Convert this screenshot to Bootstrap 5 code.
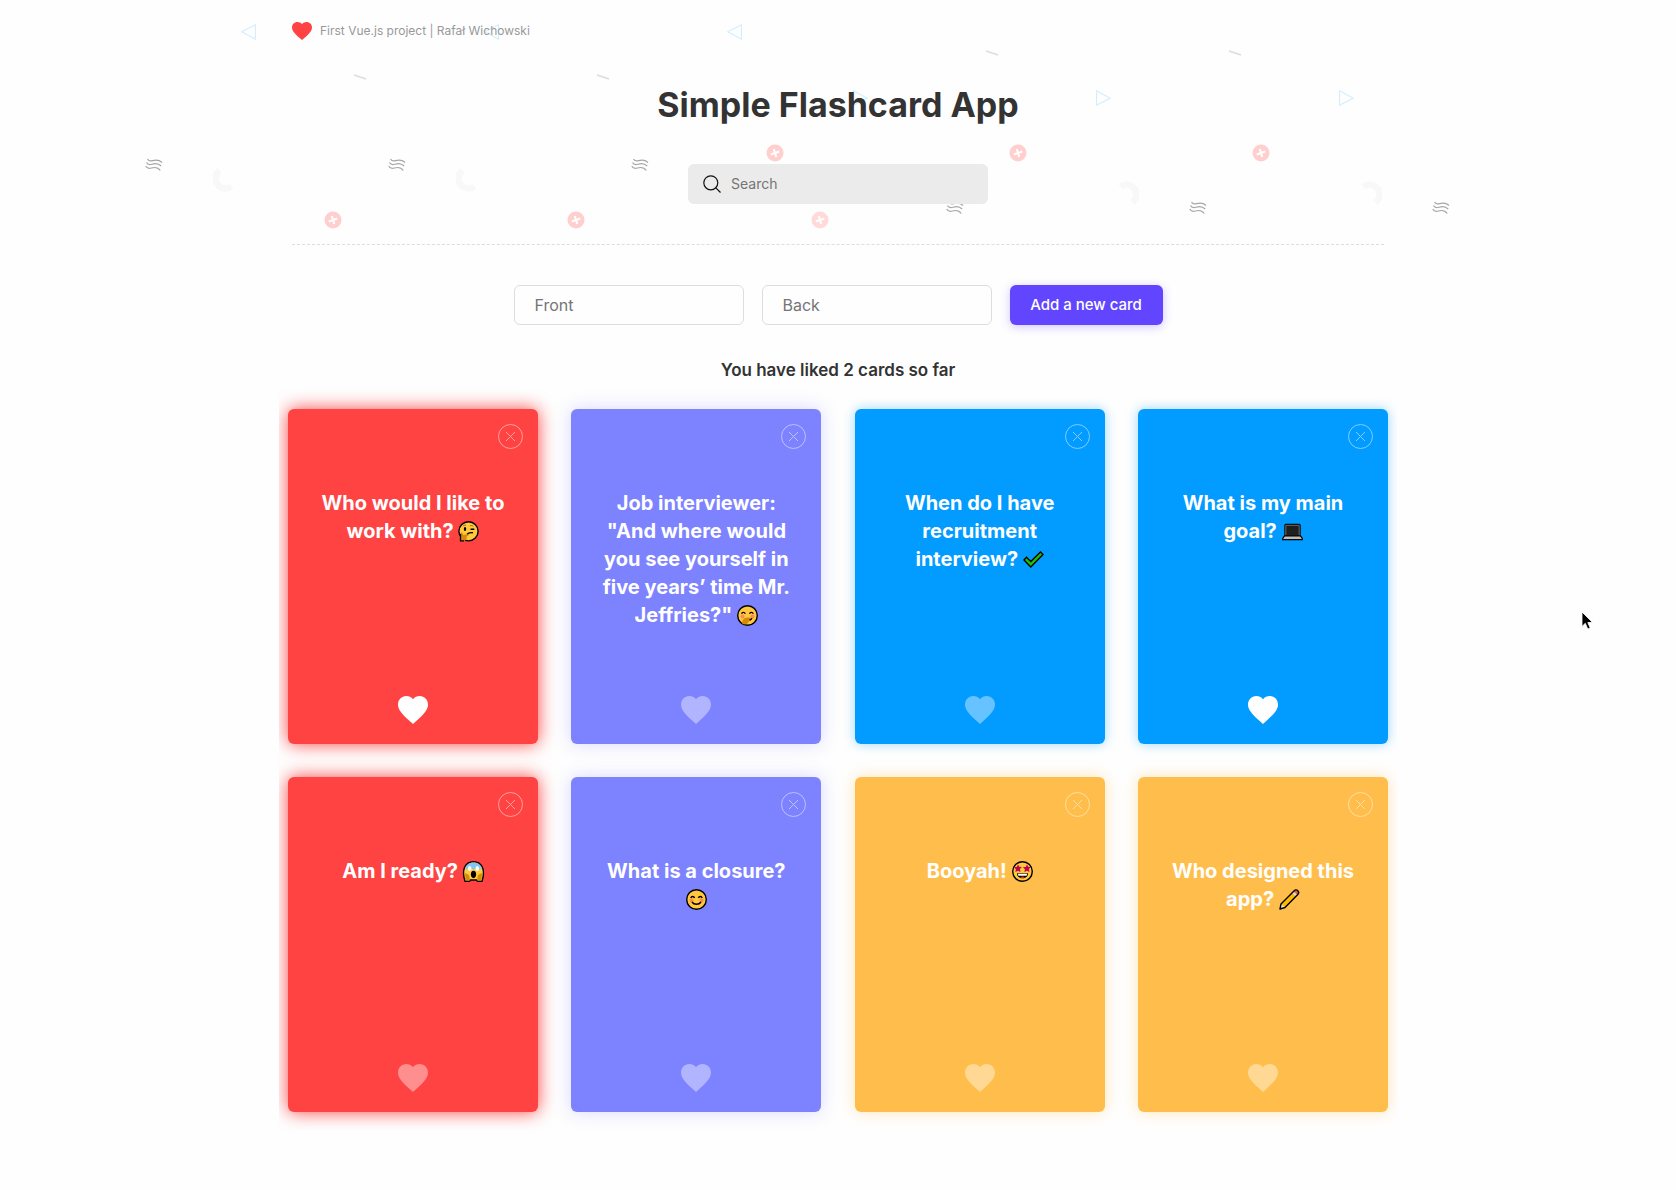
<!DOCTYPE html>
<html lang="en">
<head>
<meta charset="utf-8">
<meta name="viewport" content="width=device-width, initial-scale=1">
<title>Simple Flashcard App</title>
<link rel="stylesheet" href="https://cdn.jsdelivr.net/npm/bootstrap@5.3.0/dist/css/bootstrap.min.css">
<style>
  body { background: #fefefe; color: #333; font-family: Inter, "Open Sans", sans-serif; font-size: 16px; line-height: 24px; }
  .page { max-width: 1092px; }
  .decor { position: absolute; top: 0; left: 50%; width: 1400px; height: 240px; margin-left: -700px; z-index: -1; }
  .decor-frame { position: absolute; inset: 0 0 auto 0; height: 240px; overflow: hidden; z-index: -1; }
  .brand-link { color: #999; font-size: 12px; line-height: 22px; }
  .brand-link svg { width: 20px; height: 18px; }
  .site-head { padding: 20px 0 40px; border-bottom: 1px dashed #ddd; }
  .app-title { font-size: 34px; line-height: 40px; margin: 43px 0 39px; font-weight: 700; }
  .search-box { max-width: 300px; height: 40px; background: #ebebeb; border-radius: 6px; padding: 0 15px; gap: 10px; }
  .search-box input { font-size: 14px; line-height: 20px; }
  .search-box input::placeholder, .card-field::placeholder { color: #757575; opacity: 1; }
  .add-form { gap: 18px; padding-top: 40px; }
  .card-field { width: 230px; height: 40px; border: 1px solid #ddd; border-radius: 6px; padding: 0 20px; font-size: 16px; background: #fefefe; }
  .add-btn { width: 153px; height: 40px; padding: 0; border: 0; border-radius: 6px; background: #6246ff; color: #fff; font-size: 15px; font-weight: 500; box-shadow: 0 2px 10px rgba(98,70,255,.3); }
  .add-btn:hover { background: #5237ee; color: #fff; }
  .liked-note { font-size: 17px; font-weight: 600; margin: 33px 0 0; }
  .deck { max-width: 1118px; padding: 27px 9px 36px; overflow: hidden; }
  .deck-grid { grid-template-columns: repeat(auto-fill, 250px); justify-content: space-between; gap: 33px; }
  .flash { position: relative; height: 335px; border-radius: 6px; padding: 80px 28px 20px; color: #fff; }
  .flash p { font-size: 20px; line-height: 28px; font-weight: 700; }
  .flash p svg { width: 21px; height: 21px; vertical-align: -4px; overflow: visible; }
  .flash-red { background: #ff4343; box-shadow: 0 0 18px #ff4343; }
  .flash-violet { background: #7d82ff; box-shadow: 0 0 18px rgba(125,130,255,.3); }
  .flash-blue { background: #029bff; box-shadow: 0 0 12px rgba(2,155,255,.4); }
  .flash-amber { background: #ffbe4b; box-shadow: 0 0 15px rgba(255,190,75,.4); }
  .flash-close { position: absolute; top: 15px; right: 15px; opacity: .5; }
  .flash-close svg { width: 25px; height: 25px; }
  .flash-like { opacity: .4; }
  .flash-like.is-liked { opacity: 1; }
  .flash-like svg { width: 30px; height: 28px; }
  .icon-btn { padding: 0; border: 0; line-height: 0; background: none; color: #fff; }
  .pointer { position: absolute; left: 1581px; top: 611px; width: 13px; height: 20px; pointer-events: none; }
</style>
</head>
<body class="position-relative">

<svg class="d-none" xmlns="http://www.w3.org/2000/svg">
  <symbol id="heart" viewBox="48 64 416 384" preserveAspectRatio="none"><path fill="currentColor" d="M256 448l-30.164-27.211C118.718 322.442 48 258.61 48 179.095 48 114.221 97.918 64 162.4 64c36.399 0 70.717 16.742 93.6 43.947C278.882 80.742 313.199 64 349.6 64 414.082 64 464 114.221 464 179.095c0 79.516-70.719 143.348-177.836 241.694L256 448z"/></symbol>
  <symbol id="cross" viewBox="0 0 25 25"><g fill="none" stroke="currentColor"><circle cx="12.5" cy="12.5" r="12"/><path d="M8 8l9 9M17 8l-9 9"/></g></symbol>
  <symbol id="d-tri" viewBox="0 0 15 16"><path d="M14.500.8v14.400L.8 7.800z" fill="none" stroke="#d3effd" stroke-width="1.200"/></symbol>
  <symbol id="d-line" viewBox="0 0 14 6"><path d="M1 1l12 4" stroke="#ddd" stroke-width="1.800" fill="none"/></symbol>
  <symbol id="d-wave" viewBox="0 0 18 13"><g fill="none" stroke="#a6a6a6" stroke-width="1.200"><path d="M2.500 1c1 1.800 2.500 2.400 5 1.700s6-1.500 9.500 1.800"/><path d="M1.500 4.500c1 2 3 2.500 5.500 1.700s6-1.400 9.200 1.800"/><path d="M.8 8c1 2.300 3.200 2.700 5.600 2s6-1.500 8.900 2.500"/></g></symbol>
  <symbol id="d-plus" viewBox="0 0 18 18"><circle cx="9" cy="9" r="8.500" fill="#ffcfcd"/><path d="M7.800 5l2.400 8M4.700 10.500l8.600-3" stroke="#fff" stroke-width="2" fill="none"/></symbol>
  <symbol id="d-arc" viewBox="0 0 24 24"><path d="M6.500 2.500a9.500 9.500 0 0 0 12 16" fill="none" stroke="#f8f8f8" stroke-width="6.500"/></symbol>
</svg>

<div class="decor-frame" aria-hidden="true">
<svg class="decor" viewBox="138 0 1400 240">
  <g id="left-a">
    <use href="#d-tri" x="241" y="24" width="15" height="16"/>
    <use href="#d-line" x="353" y="74" width="14" height="6"/>
    <use href="#d-wave" x="145" y="158" width="18" height="13"/>
    <use href="#d-arc" x="213" y="168" width="24" height="24"/>
    <use href="#d-plus" x="324" y="211" width="18" height="18"/>
  </g>
  <use href="#left-a" x="243"/>
  <use href="#d-tri" x="727" y="24" width="15" height="16"/>
  <use href="#d-wave" x="631" y="158" width="18" height="13"/>
  <use href="#d-plus" x="811" y="211" width="18" height="18" opacity=".75"/>
  <g id="right-a">
    <use href="#d-tri" width="15" height="16" transform="translate(1111 106) rotate(180)"/>
    <use href="#d-line" x="985" y="50" width="14" height="6"/>
    <use href="#d-wave" x="1189" y="201" width="18" height="13"/>
    <use href="#d-arc" width="24" height="24" transform="translate(1139 205) rotate(180)"/>
    <use href="#d-plus" x="1009" y="144" width="18" height="18"/>
  </g>
  <use href="#right-a" x="243"/>
  <use href="#d-tri" width="15" height="16" transform="translate(868 106) rotate(180)"/>
  <use href="#d-wave" x="946" y="201" width="18" height="13"/>
  <use href="#d-plus" x="766" y="144" width="18" height="18"/>
</svg>
</div>

<div class="page mx-auto">
  <header class="site-head">
    <a href="#" class="brand-link d-flex align-items-center gap-2 text-decoration-none">
      <svg color="#ff4343" aria-hidden="true"><use href="#heart"/></svg>
      <span>First Vue.js project | Rafał Wichowski</span>
    </a>
    <h1 class="app-title text-center">Simple Flashcard App</h1>
    <div class="search-box d-flex align-items-center mx-auto">
      <label class="d-flex" for="search"><svg width="18" height="18" viewBox="0 0 18 18" fill="none" stroke="#111" stroke-width="1.200" aria-hidden="true"><circle cx="7.800" cy="7.800" r="7"/><path d="M12.800 12.800l4.700 4.700"/></svg></label>
      <input id="search" type="text" class="form-control border-0 bg-transparent shadow-none p-0" placeholder="Search" aria-label="Search">
    </div>
  </header>

  <form class="add-form d-flex flex-wrap justify-content-center">
    <input type="text" class="card-field" placeholder="Front" aria-label="Front">
    <input type="text" class="card-field" placeholder="Back" aria-label="Back">
    <button type="button" class="btn add-btn">Add a new card</button>
  </form>

  <p class="liked-note text-center">You have liked 2 cards so far</p>
</div>

<main class="deck mx-auto">
  <div class="deck-grid d-grid">
    <article class="flash flash-red d-flex flex-column text-center">
      <button type="button" class="icon-btn flash-close" aria-label="Remove card"><svg><use href="#cross"/></svg></button>
      <p class="m-0">Who would I like to work with? <svg viewBox="0 0 21 21"><circle cx="10.500" cy="10.300" r="9.600" fill="#ffc83d" stroke="#000" stroke-width="1.400"/><path d="M3 11.500c1.500 0 2 1 2 2.500l5-1c1 0 1.200 1.200.3 1.600L8.500 15.500c1 2-1 4.500-3 4.500H2.500C1.500 17 1.500 13 3 11.500z" fill="#d68a0c"/><path d="M2.500 13v6.800h3.500" fill="none" stroke="#000" stroke-width="1.300"/><path d="M4.800 5.300c.8-1 2-1.300 3.200-1M12 4.800c1.300-.5 2.500-.2 3.400.5" stroke="#a86500" fill="none"/><ellipse cx="7" cy="8" rx="1.200" ry="1.900"/><path d="M12.500 8.300h3.800M9 13c2.200-1.200 4-1.500 6-1.300" stroke="#000" stroke-width="1.400" fill="none"/></svg></p>
      <div class="mt-auto lh-1 d-flex justify-content-center"><button type="button" class="icon-btn flash-like is-liked" aria-label="Unlike card"><svg><use href="#heart"/></svg></button></div>
    </article>
    <article class="flash flash-violet d-flex flex-column text-center">
      <button type="button" class="icon-btn flash-close" aria-label="Remove card"><svg><use href="#cross"/></svg></button>
      <p class="m-0">Job interviewer: "And where would you see yourself in five years’ time Mr. Jeffries?" <svg viewBox="0 0 21 21"><circle cx="10.500" cy="10.500" r="9.800" fill="#ffc83d" stroke="#000" stroke-width="1.400"/><circle cx="5.500" cy="11.500" r="2" fill="#ff8a50"/><circle cx="15.500" cy="11.500" r="2" fill="#ff8a50"/><path d="M5.500 19c-1-2.500.5-5.500 3-6 1-1 6-.5 6 .8 0 1.700-1.500 2-2.500 2.200-.5 2.500-3 4-6.500 3z" fill="#d68a0c"/><path d="M4.500 8.800c.7-2 3-2 3.800 0M12.500 8.800c.7-2 3-2 3.800 0" fill="none" stroke="#000" stroke-width="1.300"/><path d="M12.500 15c1.300-.2 2-.8 2.500-1.800" stroke="#000" stroke-width="1.300" fill="none"/></svg></p>
      <div class="mt-auto lh-1 d-flex justify-content-center"><button type="button" class="icon-btn flash-like" aria-label="Like card"><svg><use href="#heart"/></svg></button></div>
    </article>
    <article class="flash flash-blue d-flex flex-column text-center">
      <button type="button" class="icon-btn flash-close" aria-label="Remove card"><svg><use href="#cross"/></svg></button>
      <p class="m-0">When do I have recruitment interview? <svg viewBox="0 0 21 21"><path d="M1 11l2.500-2.700 4.300 4.200L17.500 3 20 5.500 7.800 18z" fill="#16c60c" stroke="#000" stroke-width="1.400"/></svg></p>
      <div class="mt-auto lh-1 d-flex justify-content-center"><button type="button" class="icon-btn flash-like" aria-label="Like card"><svg><use href="#heart"/></svg></button></div>
    </article>
    <article class="flash flash-blue d-flex flex-column text-center">
      <button type="button" class="icon-btn flash-close" aria-label="Remove card"><svg><use href="#cross"/></svg></button>
      <p class="m-0">What is my main goal? <svg viewBox="0 0 21 21"><rect x="3" y="3.500" width="15" height="11.500" rx=".8" fill="#1f1f1f" stroke="#000" stroke-width="1.400"/><path d="M3.800 14V4.300h13.400V14" fill="none" stroke="#767676" stroke-width=".9"/><path d="M2.500 14.800h16l1.800 2.700v1.200H.7v-1.200z" fill="#bbb" stroke="#000" stroke-width="1.200"/></svg></p>
      <div class="mt-auto lh-1 d-flex justify-content-center"><button type="button" class="icon-btn flash-like is-liked" aria-label="Unlike card"><svg><use href="#heart"/></svg></button></div>
    </article>
    <article class="flash flash-red d-flex flex-column text-center">
      <button type="button" class="icon-btn flash-close" aria-label="Remove card"><svg><use href="#cross"/></svg></button>
      <p class="m-0">Am I ready? <svg viewBox="0 0 21 21"><path d="M2 20.300C0 14 .5 9 1.500 6.500 3 3 6.500.7 10.500.7s7.500 2.300 9 5.800c1 2.500 1.500 7.500-.5 13.800h-4.500l-1-1.300h-6l-1 1.300z" fill="#ffc83d" stroke="#000" stroke-width="1.400"/><path d="M1.800 8C3 3.800 6.500 1.400 10.500 1.400S18 3.800 19.200 8z" fill="#83c6f5"/><path d="M2 12l4 2 1 5.500H2.500zM19 12l-4 2-1 5.500h4.500z" fill="#d68a0c"/><ellipse cx="6.700" cy="7.500" rx="1.800" ry="2.500" fill="#fff"/><ellipse cx="14.300" cy="7.500" rx="1.800" ry="2.500" fill="#fff"/><ellipse cx="10.500" cy="13.300" rx="2.600" ry="3.600"/></svg></p>
      <div class="mt-auto lh-1 d-flex justify-content-center"><button type="button" class="icon-btn flash-like" aria-label="Like card"><svg><use href="#heart"/></svg></button></div>
    </article>
    <article class="flash flash-violet d-flex flex-column text-center">
      <button type="button" class="icon-btn flash-close" aria-label="Remove card"><svg><use href="#cross"/></svg></button>
      <p class="m-0">What is a closure? <svg viewBox="0 0 21 21"><circle cx="10.500" cy="10.500" r="9.800" fill="#ffc83d" stroke="#000" stroke-width="1.400"/><circle cx="5.500" cy="11.500" r="2" fill="#ff8a50"/><circle cx="15.500" cy="11.500" r="2" fill="#ff8a50"/><path d="M4.800 9c.7-2 3-2 3.800 0M12.400 9c.7-2 3-2 3.800 0M6 13c2 3 7 3 9 0" fill="none" stroke="#000" stroke-width="1.400"/></svg></p>
      <div class="mt-auto lh-1 d-flex justify-content-center"><button type="button" class="icon-btn flash-like" aria-label="Like card"><svg><use href="#heart"/></svg></button></div>
    </article>
    <article class="flash flash-amber d-flex flex-column text-center">
      <button type="button" class="icon-btn flash-close" aria-label="Remove card"><svg><use href="#cross"/></svg></button>
      <p class="m-0">Booyah! <svg viewBox="0 0 21 21"><circle cx="10.500" cy="10.500" r="9.800" fill="#ffc83d" stroke="#000" stroke-width="1.400"/><path id="star" d="M6 3.500l1.200 2.300 2.700.3-2 1.900.6 2.900L6 9.700l-2.600 1.400.5-2.900-2-1.900 2.800-.4z" fill="#c30052"/><use href="#star" x="9"/><path d="M5 12.200h11c0 3.500-2.500 5-5.500 5s-5.500-1.500-5.500-5z" fill="#000"/><path d="M5.800 12.800h9.400l-.6 2H6.400z" fill="#fff"/><path d="M8 16.200c1.200-1 3.800-1 5 0-1.200 1-3.800 1-5 0z" fill="#f03a17"/></svg></p>
      <div class="mt-auto lh-1 d-flex justify-content-center"><button type="button" class="icon-btn flash-like" aria-label="Like card"><svg><use href="#heart"/></svg></button></div>
    </article>
    <article class="flash flash-amber d-flex flex-column text-center">
      <button type="button" class="icon-btn flash-close" aria-label="Remove card"><svg><use href="#cross"/></svg></button>
      <p class="m-0">Who designed this app? <svg viewBox="0 0 21 21"><path d="M1 20l1-5L15.500 1.500c2-2 5.500 1.500 3.500 3.700L6 18.500z" fill="#ffb900"/><path d="M1 20l1-5 4 3.500z" fill="#eee"/><path d="M13 4l3.800 3.500 1.500-1.500-3.800-3.600z" fill="#ddd"/><path d="M14.800 2.400c2-2 5.800 1.300 3.800 3.300z" fill="#f0506a"/><path d="M1 20l1-5L15.500 1.500c2-2 5.500 1.500 3.500 3.700L6 18.500z" fill="none" stroke="#000" stroke-width="1.400" stroke-linejoin="round"/></svg></p>
      <div class="mt-auto lh-1 d-flex justify-content-center"><button type="button" class="icon-btn flash-like" aria-label="Like card"><svg><use href="#heart"/></svg></button></div>
    </article>
  </div>
</main>

<svg class="pointer" viewBox="0 0 13 20" aria-hidden="true"><path d="M1 1v14.500l3.300-3.200 2.500 5.700 2.400-1-2.400-5.500h4.700z" fill="#000" stroke="#fff" stroke-width=".8"/></svg>

<script src="https://cdn.jsdelivr.net/npm/bootstrap@5.3.0/dist/js/bootstrap.bundle.min.js"></script>
</body>
</html>
